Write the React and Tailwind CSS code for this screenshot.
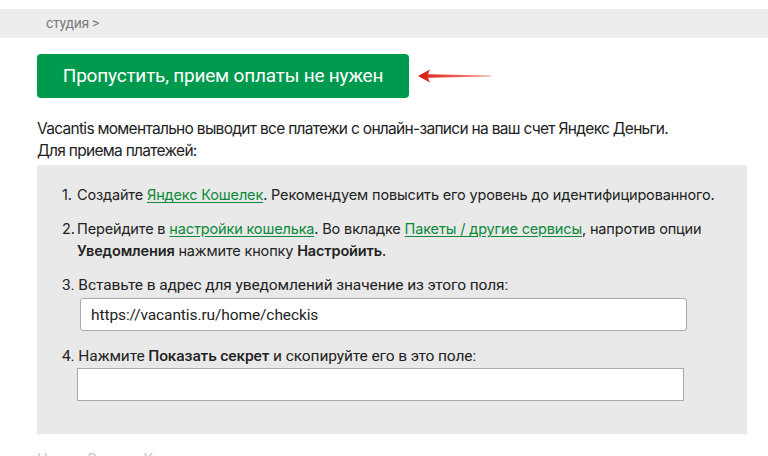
import React from 'react';

const inter = { fontFamily: 'Inter, "Noto Sans", sans-serif' };
const roboto = { fontFamily: 'Roboto, "Noto Sans", sans-serif' };

function Step({ n, children, className = '' }) {
  return (
    <li className={`flex ${className}`}>
      <span className="w-[15px] shrink-0">{n}.</span>
      <div className="flex-1">{children}</div>
    </li>
  );
}

function Arrow() {
  return (
    <svg width="74" height="14" viewBox="0 0 74 14" className="ml-[9px]">
      <defs>
        <linearGradient id="tail" x1="0" x2="1" y1="0" y2="0">
          <stop offset="0" stopColor="#d9140f" />
          <stop offset="1" stopColor="#f2543c" stopOpacity="0.6" />
        </linearGradient>
      </defs>
      <path d="M0 7 L12 0.5 L10 5.2 L73 6.4 L73 7.6 L10 8.8 L12 13.5 Z" fill="url(#tail)" />
    </svg>
  );
}

export default function App() {
  return (
    <div className="w-[768px] h-[456px] overflow-hidden bg-white text-[#222]" style={inter}>
      <div className="h-[9px]" />
      <div className="h-[29px] bg-[#ededed] flex items-center pl-[46px]">
        <span className="text-[14px] tracking-[-0.3px] text-[#7a7a7a]" style={roboto}>студия &gt;</span>
      </div>

      <div className="pl-[37px] pt-[16px] flex items-center">
        <button className="w-[372px] h-[44px] rounded-[4px] bg-[#009a4e] text-white text-[19px] tracking-[-0.2px]" style={roboto}>
          Пропустить, прием оплаты не нужен
        </button>
        <Arrow />
      </div>

      <div className="pl-[37px] pt-[20px] text-[15.5px] tracking-[-0.7px] leading-[22px] text-[#222]">
        <p>Vacantis моментально выводит все платежи с онлайн-записи на ваш счет Яндекс Деньги.</p>
        <p>Для приема платежей:</p>
      </div>

      <div className="ml-[37px] mt-[3px] w-[710px] h-[269px] bg-[#e9e9e9] pl-[25px] pt-[20px] text-[14.5px] tracking-[-0.15px]">
        <ol>
          <Step n={1} className="leading-[20px]">
            Создайте <a className="text-[#0a8a3a] underline underline-offset-2">Яндекс Кошелек</a>. Рекомендуем повысить его уровень до идентифицированного.
          </Step>
          <Step n={2} className="mt-[13px] leading-[22px]">
            Перейдите в <a className="text-[#0a8a3a] underline underline-offset-2">настройки кошелька</a>. Во вкладке{' '}
            <a className="text-[#0a8a3a] underline underline-offset-2">Пакеты / другие сервисы</a>, напротив опции
            <br />
            <b className="font-semibold">Уведомления</b> нажмите кнопку <b className="font-semibold">Настройить</b>.
          </Step>
          <li className="mt-[13px] text-[15.5px] tracking-[-0.1px] leading-[20px]" style={roboto}>
            <div>3. Вставьте в адрес для уведомлений значение из этого поля:</div>
            <div className="pl-[18px] pt-[3px]">
              <input
                readOnly
                value="https://vacantis.ru/home/checkis"
                className="w-[607px] h-[33px] bg-white border border-[#aaa] rounded-[3px] px-[10px] text-[15.5px] text-[#222] outline-none"
              />
            </div>
          </li>
          <li className="mt-[15px] text-[15.5px] tracking-[-0.1px] leading-[20px]" style={roboto}>
            <div>
              4. Нажмите <b className="font-medium">Показать секрет</b> и скопируйте его в это поле:
            </div>
            <div className="pl-[15px] pt-[2px]">
              <input className="w-[607px] h-[33px] bg-white border border-[#aaa] outline-none" />
            </div>
          </li>
        </ol>
      </div>

      <div className="pl-[37px] pt-[14px] text-[15px] text-[#ccc]" style={roboto}>
        Номер Вашего Кошелька
      </div>
    </div>
  );
}
